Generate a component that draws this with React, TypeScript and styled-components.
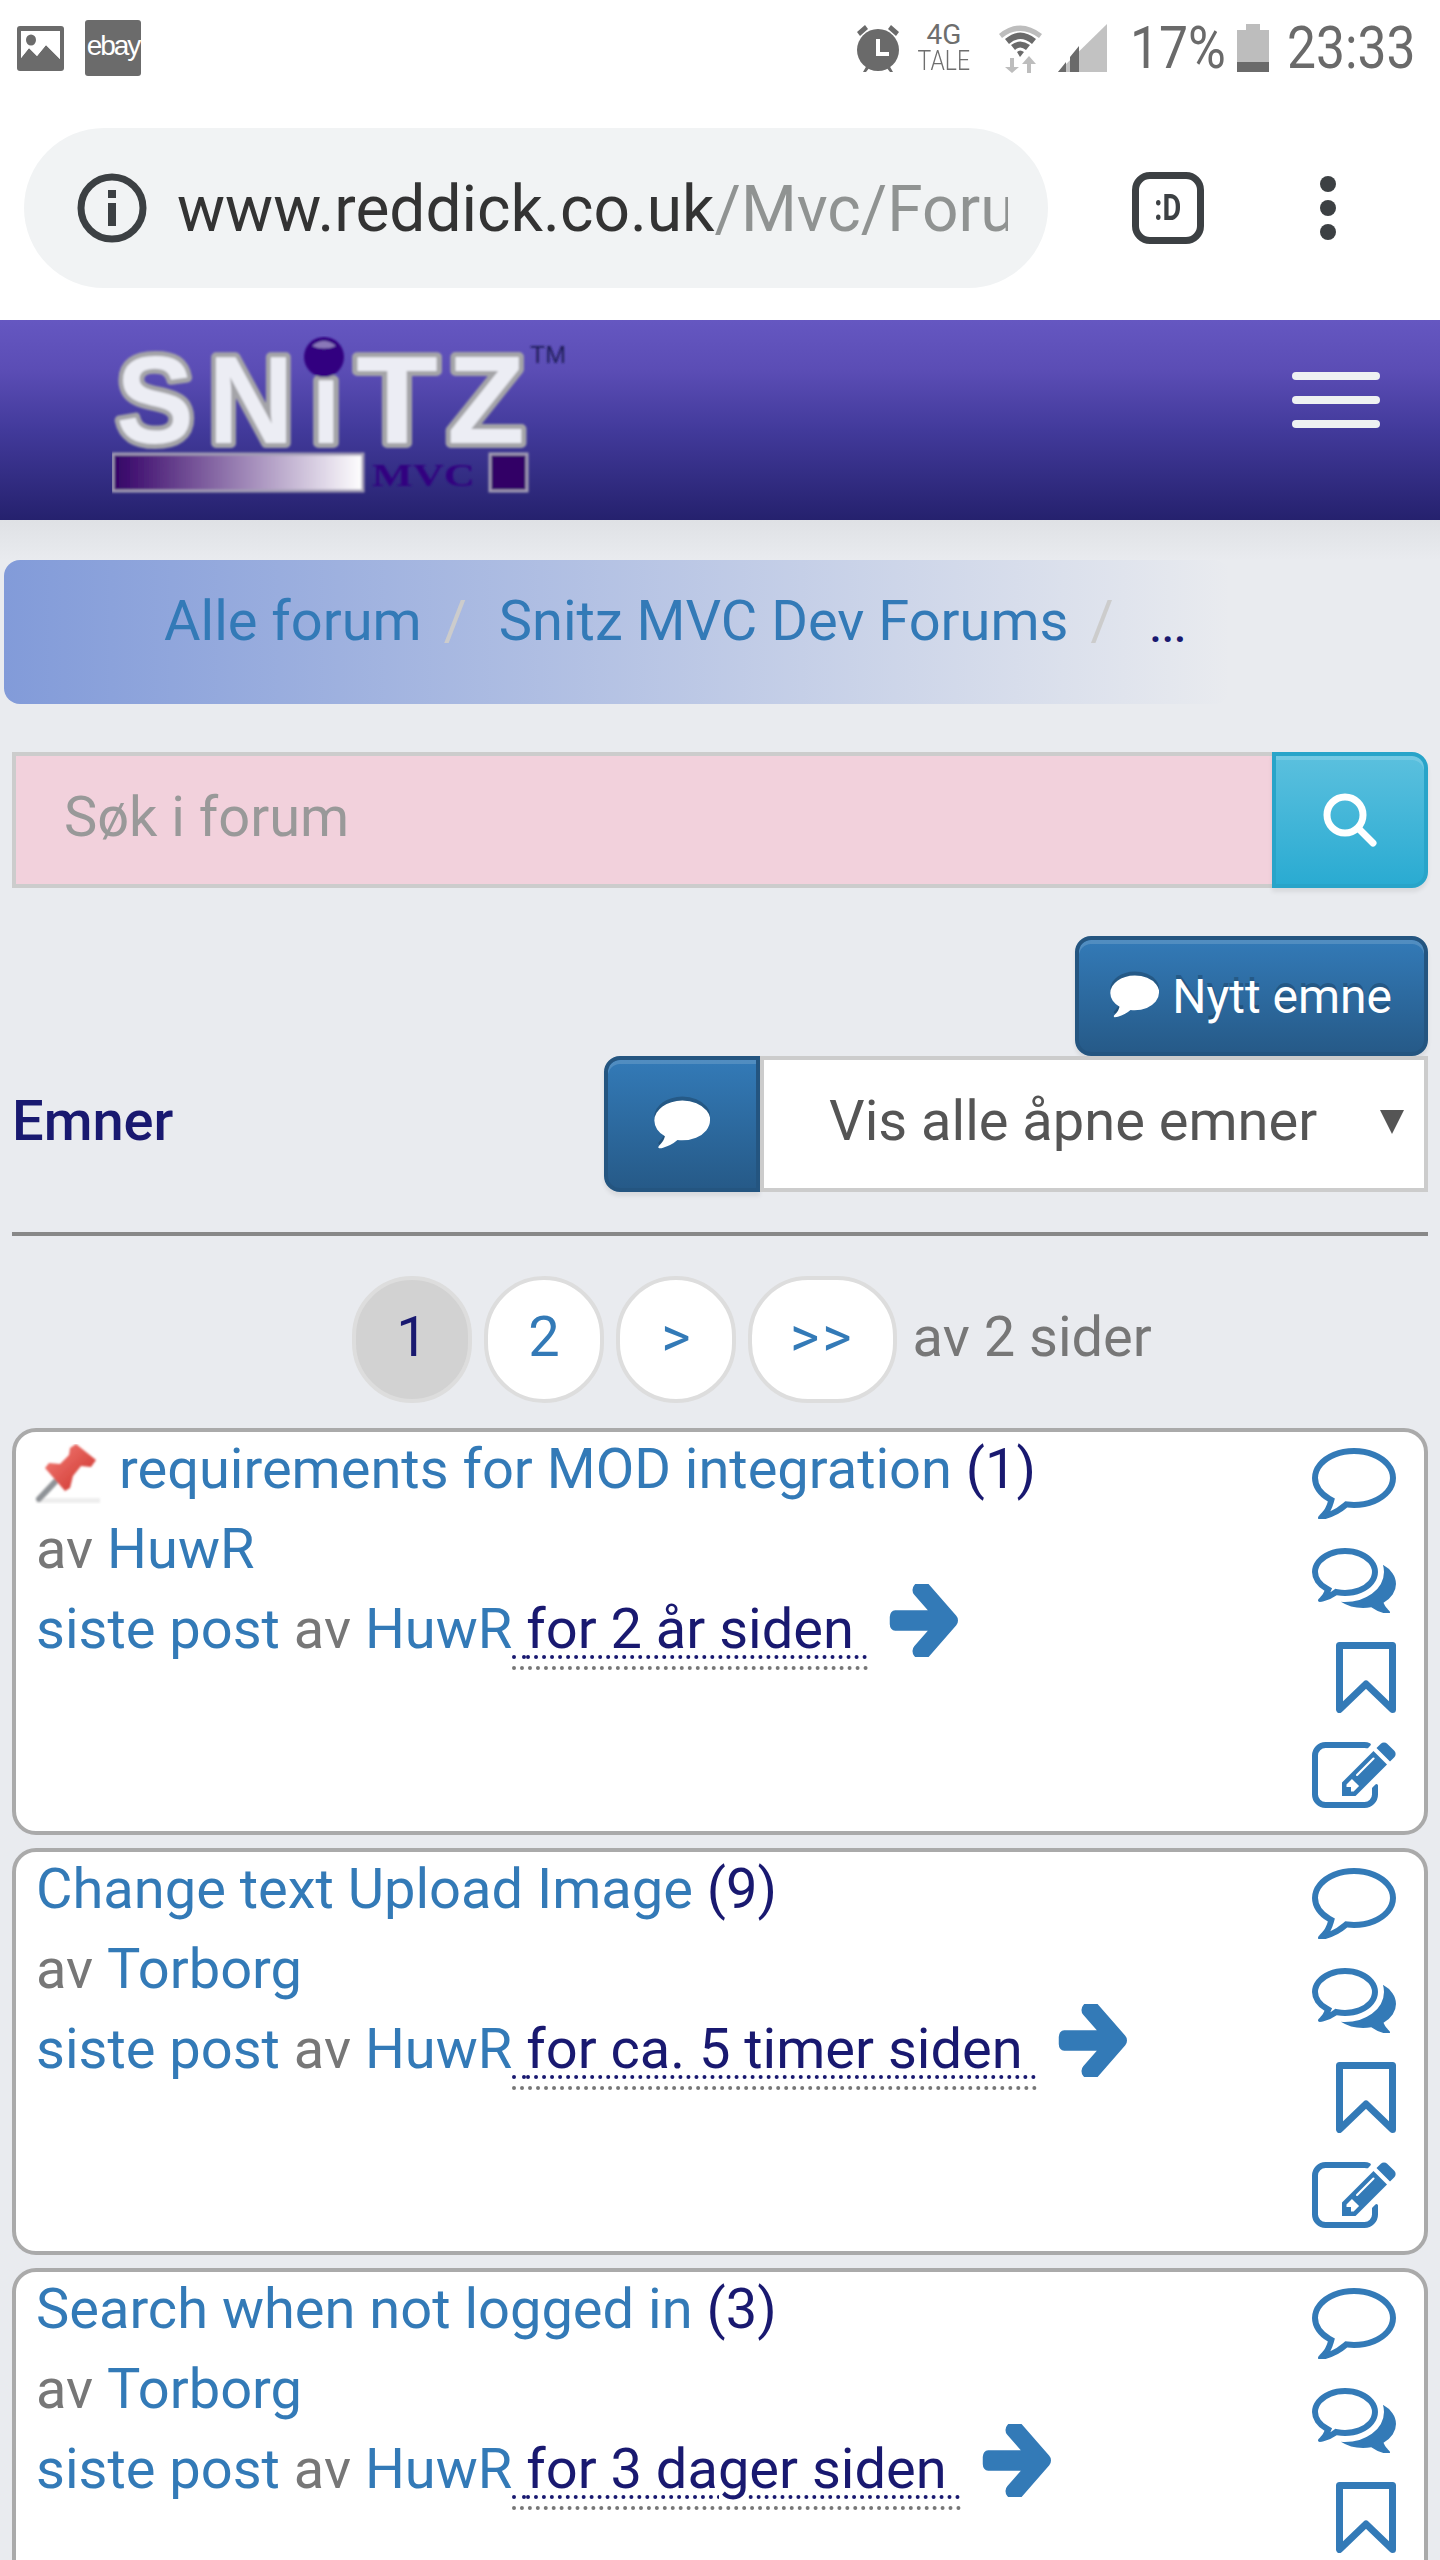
import React from "react";
import styled, { createGlobalStyle } from "styled-components";

const LINK = "#337ab7";
const NAVY = "#191970";
const MUTED = "#777";

const GlobalStyle = createGlobalStyle`
	html, body {
		margin: 0;
		padding: 0;
		background: #e9ebef;
		overflow: hidden;
	}
	#root {
		width: 1440px;
		height: 2560px;
		overflow: hidden;
		font-family: Roboto, "Liberation Sans", sans-serif;
		font-size: 56px;
		line-height: 80px;
		color: #333;
	}
	* {
		box-sizing: border-box;
	}
`;

const Chrome = styled.div`
	background: #fff;
	height: 320px;
`;

const StatusBar = styled.div`
	height: 96px;
	display: flex;
	align-items: center;
	justify-content: space-between;
	padding: 0 25px 0 17px;
`;

const StatusGroup = styled.div`
	display: flex;
	align-items: center;
`;

const StatusItem = styled.div<{ $ml?: number }>`
	display: flex;
	margin-left: ${({ $ml = 0 }) => $ml}px;
`;

const StatusText = styled.span<{ $ml?: number; $w: number }>`
	width: ${({ $w }) => $w}px;
	margin-left: ${({ $ml = 0 }) => $ml}px;
	font-size: 60px;
	line-height: 60px;
	color: #6a6a6a;
	white-space: nowrap;
	transform: scaleX(0.86);
	transform-origin: left center;
`;

const EbayBadge = styled.div`
	width: 56px;
	height: 56px;
	margin-left: 21px;
	border-radius: 3px;
	background: #6b6b6b;
	color: #fff;
	font-family: "Liberation Sans", Arial, sans-serif;
	font-size: 28px;
	line-height: 52px;
	letter-spacing: -2px;
	text-align: center;
`;

const NetworkLabel = styled.div`
	width: 52px;
	margin-left: 17px;
	display: flex;
	flex-direction: column;
	align-items: center;
	color: #6e6e6e;
`;

const NetworkType = styled.span`
	font-size: 28px;
	line-height: 27px;
`;

const NetworkCarrier = styled.span`
	font-size: 27px;
	line-height: 27px;
	font-weight: 300;
	transform: scaleX(0.85);
`;

const ToolBar = styled.div`
	margin-top: 32px;
	padding-left: 24px;
	height: 160px;
	display: flex;
	align-items: center;
`;

const AddressPill = styled.div`
	width: 1024px;
	height: 160px;
	padding-left: 53px;
	display: flex;
	align-items: center;
	border-radius: 80px;
	background: #f1f3f4;
`;

const UrlText = styled.div`
	width: 831px;
	margin: 4px 0 0 30px;
	overflow: hidden;
	white-space: nowrap;
	font-size: 64px;
	line-height: 80px;
	color: #333;
`;

const UrlPath = styled.span`
	color: #909392;
`;

const TabCounter = styled.div`
	width: 72px;
	height: 72px;
	margin-left: 84px;
	display: flex;
	align-items: center;
	justify-content: center;
	border: 7px solid #3c4043;
	border-radius: 18px;
	color: #3c4043;
`;

const TabLabel = styled.span`
	font-size: 36px;
	line-height: 36px;
	font-weight: 700;
	transform: scaleX(0.8);
`;

const MenuDots = styled.div`
	margin-left: 116px;
	display: flex;
	flex-direction: column;
	gap: 8px;
`;

const MenuDot = styled.span`
	width: 16px;
	height: 16px;
	border-radius: 50%;
	background: #3c4043;
`;

const SiteHeader = styled.header`
	height: 200px;
	padding: 16px 60px 0 112px;
	display: flex;
	align-items: flex-start;
	justify-content: space-between;
	background: linear-gradient(#6557c1, #5b4db5 25%, #423a9b 55%, #25216e);
`;

const Hamburger = styled.div`
	width: 88px;
	margin-top: 36px;
	display: flex;
	flex-direction: column;
	gap: 16px;
`;

const HamburgerLine = styled.span`
	height: 8px;
	border-radius: 4px;
	background: #eef1f2;
`;

const Main = styled.main`
	padding-top: 40px;
	background: linear-gradient(#dfe1e5, #e9ebef 40px);
`;

const Breadcrumb = styled.ol`
	width: 1226px;
	height: 144px;
	margin: 0 0 0 4px;
	padding: 21px 0 0 160px;
	display: flex;
	list-style: none;
	border-radius: 16px;
	background: linear-gradient(to right, #829bd9, rgba(130, 155, 217, 0));
`;

const Crumb = styled.li`
	color: ${LINK};
	white-space: nowrap;
`;

const CrumbCurrent = styled.li`
	margin: 6px 0 0 4px;
	color: ${NAVY};
	font-size: 44px;
	font-weight: 500;
	white-space: nowrap;
`;

const CrumbDivider = styled.li`
	padding: 0 32px 0 22px;
	color: #ccc;
`;

const SearchForm = styled.form`
	height: 136px;
	margin: 48px 12px 0;
	display: flex;
`;

const SearchInput = styled.input`
	flex: 1;
	min-width: 0;
	height: 136px;
	padding: 0 48px 7px;
	border: 4px solid #ccc;
	border-right: 0;
	border-radius: 0;
	outline: 0;
	background: #f2d1dc;
	font-family: inherit;
	font-size: 56px;

	&::placeholder {
		color: #999;
		opacity: 1;
	}
`;

const SearchButton = styled.button`
	width: 156px;
	height: 136px;
	padding: 0;
	display: flex;
	align-items: center;
	justify-content: center;
	border: 4px solid #28a4c9;
	border-radius: 0 16px 16px 0;
	background: linear-gradient(#5bc0de, #2aabd2);
	box-shadow: inset 0 4px 0 rgba(255, 255, 255, 0.15), 0 4px 4px rgba(0, 0, 0, 0.075);
`;

const ActionRow = styled.div`
	margin: 48px 12px 0;
	display: flex;
	justify-content: flex-end;
`;

const PrimaryButton = styled.button`
	height: 120px;
	padding: 0 32px 0 31px;
	display: flex;
	align-items: center;
	gap: 13px;
	border: 4px solid #245580;
	border-radius: 16px;
	background: linear-gradient(#337ab7, #265a88);
	box-shadow: inset 0 4px 0 rgba(255, 255, 255, 0.15), 0 4px 4px rgba(0, 0, 0, 0.075);
	color: #fff;
	font-family: inherit;
	font-size: 48px;
	text-shadow: 0 -4px 0 rgba(0, 0, 0, 0.2);
`;

const TopicBar = styled.div`
	height: 136px;
	margin: 0 12px;
	display: flex;
	align-items: center;
	justify-content: space-between;
`;

const TopicTitle = styled.h2`
	margin: -7px 0 0;
	color: ${NAVY};
	font-size: 56px;
	line-height: 80px;
	font-weight: 500;
`;

const FilterGroup = styled.div`
	display: flex;
`;

const FilterIconBox = styled.div`
	width: 156px;
	height: 136px;
	display: flex;
	align-items: center;
	justify-content: center;
	border: 4px solid #245580;
	border-radius: 16px 0 0 16px;
	background: linear-gradient(#337ab7, #265a88);
	box-shadow: inset 0 4px 0 rgba(255, 255, 255, 0.15), 0 4px 4px rgba(0, 0, 0, 0.075);
`;

const FilterSelect = styled.div`
	width: 668px;
	height: 136px;
	padding: 0 0 7px 65px;
	display: flex;
	align-items: center;
	border: 4px solid #ccc;
	background: #fff;
	color: #555;
	position: relative;
`;

const SelectCaret = styled.span`
	position: absolute;
	top: 50px;
	right: 20px;
	border-style: solid;
	border-width: 24px 12px 0;
	border-color: #555 transparent transparent;
`;

const Rule = styled.hr`
	height: 4px;
	margin: 40px 12px 40px;
	border: 0;
	background: #888;
`;

const Pager = styled.div`
	height: 127px;
	padding-left: 352px;
	display: flex;
	align-items: center;
	gap: 12px;
`;

const PageLink = styled.a<{ $active?: boolean; $arrow?: boolean }>`
	height: 127px;
	min-width: 120px;
	padding: 0 ${({ $arrow }) => ($arrow ? 38 : 36)}px 5px;
	display: flex;
	align-items: center;
	justify-content: center;
	border: 4px solid #ddd;
	border-radius: 60px;
	background: ${({ $active }) => ($active ? "#d2d2d2" : "#fff")};
	color: ${({ $active }) => ($active ? NAVY : LINK)};
	letter-spacing: ${({ $arrow }) => ($arrow ? 3 : 0)}px;
`;

const PagerNote = styled.span`
	margin: -5px 0 0 4px;
	color: ${MUTED};
`;

const TopicList = styled.div`
	margin: 25px 12px 0;
	display: flex;
	flex-direction: column;
	gap: 13px;
`;

const TopicCard = styled.article`
	height: 407px;
	flex: none;
	padding: 0 28px 0 20px;
	display: flex;
	justify-content: space-between;
	border: 4px solid #aaa;
	border-radius: 24px;
	background: #fff;
`;

const TopicBody = styled.div`
	margin-top: -3px;
	white-space: nowrap;
`;

const TopicLine = styled.div`
	display: flex;
	align-items: baseline;
	height: 80px;
	white-space: pre;
`;

const Link = styled.a`
	color: ${LINK};
`;

const Navy = styled.span`
	color: ${NAVY};
`;

const Muted = styled.span`
	color: ${MUTED};
`;

const TimeAgo = styled.abbr`
	color: ${NAVY};
	border-bottom: 4px dotted ${MUTED};
	text-decoration: underline dotted ${NAVY} 4px;
	text-underline-offset: 7px;
	line-height: 74px;
`;

const ActionIcons = styled.div`
	padding-top: 16px;
	display: flex;
	flex-direction: column;
	align-items: flex-end;
	gap: 29px;
`;

const Blue = styled.svg`
	display: block;
	fill: ${LINK};
`;

const ArrowSvg = styled(Blue)`
	align-self: flex-start;
	margin: -5px 0 0 20px;
`;

const PinSvg = styled.svg`
	flex: none;
	align-self: flex-start;
	margin: 15px 17px 0 -2px;
`;

const COMMENT_O =
	"M896 384q-204 0-381.5 69.5t-282 187.5-104.5 255q0 112 71.5 213.5t201.5 175.5l87 50-27 96q-24 91-70 172 152-63 275-171l43-38 57 6q69 8 130 8 204 0 381.5-69.5t282-187.5 104.5-255-104.5-255-282-187.5-381.5-69.5zm896 512q0 174-120 321.5t-326 233-450 85.5q-70 0-145-8-198 175-460 242-49 14-114 22h-5q-15 0-27-10.5t-16-27.5v-1q-3-4-.5-12t2-10 4.5-9.5l6-9 7-8.5 8-9q7-8 31-34.5t34.5-38 31-39.5 32.5-51 27-59 26-76q-157-89-247.5-220t-90.5-281q0-174 120-321.5t326-233 450-85.5 450 85.5 326 233 120 321.5z";
const COMMENTS_O =
	"M704 384q-153 0-286 52t-211.5 141-78.5 191q0 82 53 158t149 132l97 56-35 84q34-20 62-39l44-31 53 10q78 14 153 14 153 0 286-52t211.5-141 78.5-191-78.5-191-211.5-141-286-52zm0-128q191 0 353.5 68.5t256.5 186.5 94 257-94 257-256.5 186.5-353.5 68.5q-86 0-176-16-124 88-278 128-36 9-86 16h-3q-11 0-20.5-8t-11.5-21q-1-3-1-6.5t.5-6.5 2-6l2.5-5 3.5-5.5 4-5 4.5-5 4-4.5q5-6 23-25t26-29.5 22.5-29 25-38.5 20.5-44q-124-72-195-177t-71-224q0-139 94-257t256.5-186.5 353.5-68.5zm822 1169q10 24 20.5 44t25 38.5 22.5 29 26 29.5 23 25q1 1 4 4.5t4.5 5 4 5 3.5 5.5l2.5 5 2 6 .5 6.5-1 6.5q-3 14-13 22t-22 7q-50-7-86-16-154-40-278-128-90 16-176 16-271 0-472-132 58 4 88 4 161 0 309-45t264-129q125-92 192-212t67-254q0-77-23-152 129 71 204 178t75 230q0 120-71 224.5t-195 176.5z";
const PENCIL_SQUARE_O =
	"M888 1184l116-116-152-152-116 116v56h96v96h56zm440-720q-16-16-33 1l-350 350q-17 17-1 33t33-1l350-350q17-17 1-33zm80 594v190q0 119-84.5 203.5t-203.5 84.5h-832q-119 0-203.5-84.5t-84.5-203.5v-832q0-119 84.5-203.5t203.5-84.5h832q63 0 117 25 15 7 18 23 3 17-9 29l-49 49q-14 14-32 8-23-6-45-6h-832q-66 0-113 47t-47 113v832q0 66 47 113t113 47h832q66 0 113-47t47-113v-126q0-13 9-22l64-64q15-15 35-7t20 29zm-96-738l288 288-672 672h-288v-288zm444 132l-92 92-288-288 92-92q28-28 68-28t68 28l152 152q28 28 28 68t-28 68z";
const COMMENT_SOLID =
	"M1792 896q0 174-120 321.5t-326 233-450 85.5q-70 0-145-8-198 175-460 242-49 14-114 22-13 1-23.5-7t-13.5-22v-1q-3-4-.5-12t2-10 4.5-9.5l6-9 7-8.5 8-9q7-8 31-34.5t34.5-38 31-39.5 32.5-51 27-59 26-76q-157-89-247.5-220t-90.5-281q0-130 71-248.5t191-204.5 286-136.5 348-50.5q244 0 450 85.5t326 233 120 321.5z";
const ARROW_RIGHT =
	"M1600 960q0 54-37 91l-651 651q-39 37-91 37-51 0-90-37l-75-75q-38-38-38-91t38-91l293-293h-704q-52 0-84.5-37.5t-32.5-90.5v-128q0-53 32.5-90.5t84.5-37.5h704l-293-294q-38-36-38-90t38-90l75-75q38-38 90-38 53 0 91 38l651 651q37 35 37 90z";

const CommentIcon = () => (
	<Blue width="84" height="71" viewBox="0 256 1792 1515">
		<path d={COMMENT_O} />
	</Blue>
);

const CommentsIcon = () => (
	<Blue width="84" height="65" viewBox="0 256 1792 1387">
		<path d={COMMENTS_O} />
	</Blue>
);

const BookmarkIcon = () => (
	<svg width="60" height="71" viewBox="0 0 60 71" style={{ display: "block" }}>
		<path d="M3.500 3.500H56.500V67.500L30 42L3.500 67.500Z" fill="none" stroke={LINK} strokeWidth="7" strokeLinejoin="round" />
	</svg>
);

const EditIcon = () => (
	<Blue width="84" height="66" viewBox="0 128 1792 1408">
		<path d={PENCIL_SQUARE_O} />
	</Blue>
);

const Bubble = ({ w, h }: { w: number; h: number }) => (
	<svg width={w} height={h} viewBox="0 256 1792 1515" fill="#fff" style={{ filter: "drop-shadow(0 -4px 0 rgba(0,0,0,.2))" }}>
		<path d={COMMENT_SOLID} />
	</svg>
);

const ArrowIcon = () => (
	<ArrowSvg width="70" height="73" viewBox="90 272 1510 1376" preserveAspectRatio="none">
		<path d={ARROW_RIGHT} />
	</ArrowSvg>
);

const PinIcon = () => (
	<PinSvg width="68" height="60" viewBox="0 0 68 60">
		<defs>
			<linearGradient id="pinRed" x1="0" y1="0" x2="1" y2="1">
				<stop offset="0" stopColor="#f47f78" />
				<stop offset="1" stopColor="#cc2f29" />
			</linearGradient>
			<filter id="pinSoft">
				<feGaussianBlur stdDeviation="0.8" />
			</filter>
		</defs>
		<g filter="url(#pinSoft)">
			<rect x="2" y="54" width="64" height="5" fill="#eee" />
			<path d="M5 55L21 38" stroke="#8f9397" strokeWidth="6" strokeLinecap="round" />
			<path d="M42 0L62 16L57 23L47 22L39 32L36 44L31 47L11 24L15 19L26 20L35 11L36 4Z" fill="url(#pinRed)" />
		</g>
	</PinSvg>
);

const LOGO_LETTERS = [
	{ ch: "S", x: 4, w: 78, size: 124 },
	{ ch: "N", x: 96, w: 86, size: 124 },
	{ ch: "I", x: 200, w: 28, size: 90 },
	{ ch: "T", x: 244, w: 82, size: 124 },
	{ ch: "Z", x: 335, w: 78, size: 124 },
];

const Logo = () => (
	<svg width="460" height="160" viewBox="0 0 460 160" style={{ display: "block" }}>
		<defs>
			<linearGradient id="logoBar">
				<stop offset="0" stopColor="#330066" />
				<stop offset="1" stopColor="#ffffff" />
			</linearGradient>
			<filter id="soft">
				<feGaussianBlur stdDeviation="0.9" />
			</filter>
		</defs>
		<g filter="url(#soft)" fontFamily="Liberation Sans" fontWeight="700">
			{LOGO_LETTERS.map((l) => (
				<text
					key={l.ch}
					x={l.x}
					y="107"
					fontSize={l.size}
					textLength={l.w}
					lengthAdjust="spacingAndGlyphs"
					fill="#ecedf4"
					stroke="#a4a4a8"
					strokeWidth="10"
					strokeLinejoin="round"
					paintOrder="stroke"
				>
					{l.ch}
				</text>
			))}
			<circle cx="212" cy="21" r="20" fill="#330080" />
			<path d="M200 10Q212 0 224 10Q212 15 200 10Z" fill="#8a78b8" />
			<rect x="1" y="118" width="250" height="37" fill="url(#logoBar)" stroke="#a29db4" strokeWidth="3" />
			<rect x="378" y="118" width="37" height="37" fill="#330066" stroke="#a29db4" strokeWidth="3" />
			<text x="260" y="150" fontFamily="Liberation Serif" fontSize="32" fill="#330080" textLength="103" lengthAdjust="spacingAndGlyphs">
				MVC
			</text>
			<text x="418" y="27" fontWeight="400" fontSize="24" fill="#1d1a55" textLength="36" lengthAdjust="spacingAndGlyphs">
				TM
			</text>
		</g>
	</svg>
);

type Topic = {
	title: string;
	count: number;
	author: string;
	age: string;
	pinned?: boolean;
};

const TOPICS: Topic[] = [
	{ title: "requirements for MOD integration", count: 1, author: "HuwR", age: "for 2 år siden ", pinned: true },
	{ title: "Change text Upload Image", count: 9, author: "Torborg", age: "for ca. 5 timer siden " },
	{ title: "Search when not logged in", count: 3, author: "Torborg", age: "for 3 dager siden " },
];

export default function App() {
	return (
		<>
			<GlobalStyle />
			<Chrome>
				<StatusBar>
					<StatusGroup>
						<StatusItem>
							<svg width="47" height="45" viewBox="0 0 47 45">
								<rect width="47" height="45" rx="3" fill="#6b6b6b" />
								<rect x="4" y="5" width="39" height="35" fill="#fff" />
								<path d="M4 40V32L12 22L20 30L29 19L43 33V40Z" fill="#6b6b6b" />
								<path d="M4 32L4 28L12 18L20 26L29 15L43 29V33L29 19L20 30L12 22Z" fill="#fff" />
								<ellipse cx="14" cy="14" rx="5" ry="5.500" fill="#6b6b6b" />
							</svg>
						</StatusItem>
						<EbayBadge>ebay</EbayBadge>
					</StatusGroup>
					<StatusGroup>
						<svg width="46" height="48" viewBox="0 0 46 48">
							<circle cx="23" cy="26" r="21" fill="#6a6a6a" />
							<path d="M2 8L10 1L13 5L5 12ZM44 8L36 1L33 5L41 12Z" fill="#6a6a6a" />
							<path d="M8 48L12 41L15 43L11 48ZM38 48L34 41L31 43L35 48Z" fill="#6a6a6a" />
							<path d="M21 15H25V28H34V32H21Z" fill="#fff" />
						</svg>
						<NetworkLabel>
							<NetworkType>4G</NetworkType>
							<NetworkCarrier>TALE</NetworkCarrier>
						</NetworkLabel>
						<StatusItem $ml={29}>
							<svg width="43" height="49" viewBox="0 0 43 49">
								<path d="M0 10Q21 -7 43 10L40 14Q21 0 3 14Z" fill="#bdbdbd" />
								<path d="M6 15Q21 2 37 15L33 20Q21 10 10 20Z" fill="#6a6a6a" />
								<path d="M12 21Q21 14 31 21L27 26Q21 21 16 26Z" fill="#6a6a6a" />
								<path d="M18 28Q21 25 25 28L21 33Z" fill="#6a6a6a" />
								<path d="M11 34V43H6L13 49L20 43H15V34Z" fill="#bdbdbd" />
								<path d="M28 49V40H23L30 32L37 40H32V49Z" fill="#bdbdbd" />
							</svg>
						</StatusItem>
						<StatusItem $ml={16}>
							<svg width="49" height="48" viewBox="0 0 49 48">
								<path d="M49 0V48H0Z" fill="#c2c2c2" />
								<path d="M0 48L8 38V48ZM12 33L21 22V48H12Z" fill="#6a6a6a" />
							</svg>
						</StatusItem>
						<StatusText $ml={23} $w={93}>17%</StatusText>
						<StatusItem $ml={14}>
							<svg width="32" height="48" viewBox="0 0 32 48">
								<path d="M9 0H23V6H32V48H0V6H9Z" fill="#bdbdbd" />
								<rect y="38" width="32" height="10" fill="#6a6a6a" />
							</svg>
						</StatusItem>
						<StatusText $ml={18} $w={128}>23:33</StatusText>
					</StatusGroup>
				</StatusBar>
				<ToolBar>
					<AddressPill>
						<svg width="70" height="70" viewBox="0 0 70 70">
							<circle cx="35" cy="35" r="31" fill="none" stroke="#3c4043" strokeWidth="7" />
							<rect x="31" y="17" width="8" height="8" fill="#3c4043" />
							<rect x="31" y="30" width="8" height="23" fill="#3c4043" />
						</svg>
						<UrlText>
							www.reddick.co.uk<UrlPath>/Mvc/Forum/Topic</UrlPath>
						</UrlText>
					</AddressPill>
					<TabCounter>
						<TabLabel>:D</TabLabel>
					</TabCounter>
					<MenuDots>
						<MenuDot />
						<MenuDot />
						<MenuDot />
					</MenuDots>
				</ToolBar>
			</Chrome>
			<SiteHeader>
				<Logo />
				<Hamburger>
					<HamburgerLine />
					<HamburgerLine />
					<HamburgerLine />
				</Hamburger>
			</SiteHeader>
			<Main>
				<Breadcrumb>
					<Crumb>Alle forum</Crumb>
					<CrumbDivider>/</CrumbDivider>
					<Crumb>Snitz MVC Dev Forums</Crumb>
					<CrumbDivider>/</CrumbDivider>
					<CrumbCurrent>...</CrumbCurrent>
				</Breadcrumb>
				<SearchForm>
					<SearchInput placeholder="Søk i forum" />
					<SearchButton type="button">
						<svg width="54" height="54" viewBox="0 0 54 54" fill="none" stroke="#fff">
							<circle cx="22" cy="22" r="18" strokeWidth="7" />
							<path d="M36 36L50 50" strokeWidth="7" strokeLinecap="round" />
						</svg>
					</SearchButton>
				</SearchForm>
				<ActionRow>
					<PrimaryButton type="button">
						<Bubble w={49} h={44} />
						Nytt emne
					</PrimaryButton>
				</ActionRow>
				<TopicBar>
					<TopicTitle>Emner</TopicTitle>
					<FilterGroup>
						<FilterIconBox>
							<Bubble w={56} h={52} />
						</FilterIconBox>
						<FilterSelect>
							Vis alle åpne emner
							<SelectCaret />
						</FilterSelect>
					</FilterGroup>
				</TopicBar>
				<Rule />
				<Pager>
					<PageLink $active>1</PageLink>
					<PageLink>2</PageLink>
					<PageLink>&gt;</PageLink>
					<PageLink $arrow>&gt;&gt;</PageLink>
					<PagerNote>av 2 sider</PagerNote>
				</Pager>
				<TopicList>
					{TOPICS.map((topic) => (
						<TopicCard key={topic.title}>
							<TopicBody>
								<TopicLine>
									{topic.pinned && <PinIcon />}
									<Link>{topic.title}</Link>
									<Navy> ({topic.count})</Navy>
								</TopicLine>
								<TopicLine>
									<Muted>av </Muted>
									<Link>{topic.author}</Link>
								</TopicLine>
								<TopicLine>
									<Link>siste post</Link>
									<Muted> av </Muted>
									<Link>HuwR</Link>
									<TimeAgo> {topic.age}</TimeAgo>
									<ArrowIcon />
								</TopicLine>
							</TopicBody>
							<ActionIcons>
								<CommentIcon />
								<CommentsIcon />
								<BookmarkIcon />
								<EditIcon />
							</ActionIcons>
						</TopicCard>
					))}
				</TopicList>
			</Main>
		</>
	);
}
